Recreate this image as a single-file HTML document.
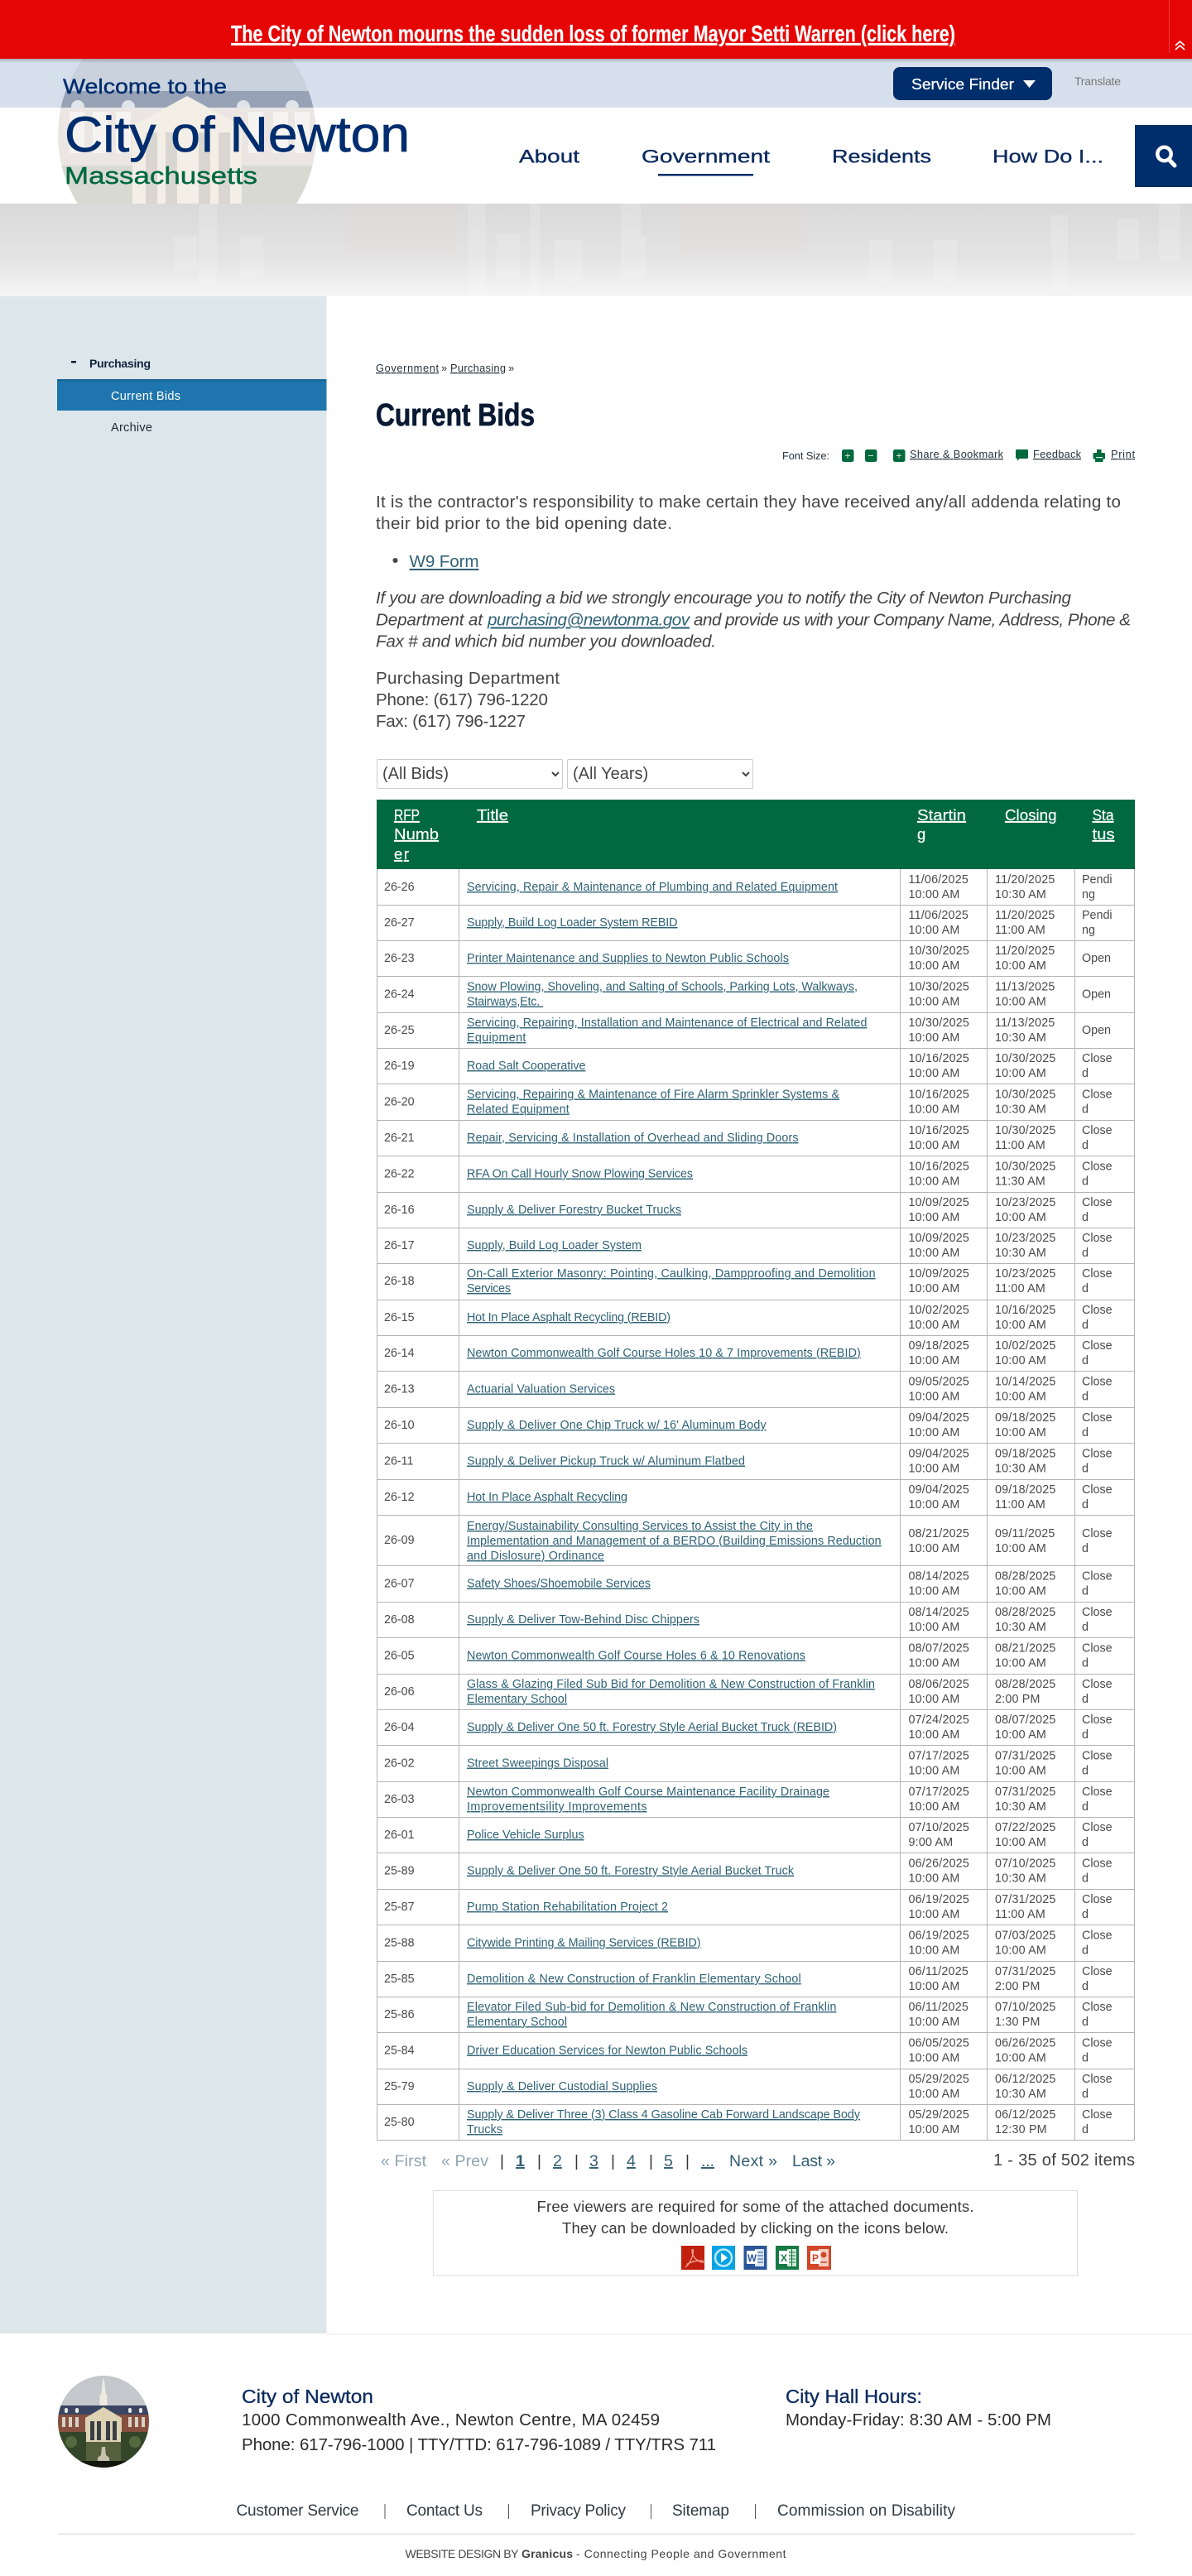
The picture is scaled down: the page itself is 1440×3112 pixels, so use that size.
<!DOCTYPE html>
<html lang="en"><head><meta charset="utf-8"><title>Current Bids | City of Newton</title>
<style>
html,body{margin:0;padding:0;background:#fff}
body{position:relative;width:1440px;height:3112px;overflow:hidden;font-family:"Liberation Sans",sans-serif}
svg{position:absolute;left:0;top:0;display:block}
text{font-family:"Liberation Sans",sans-serif;white-space:pre}
.t text{font-size:14.300px;fill:#4a4a4a}
.t .d{letter-spacing:.2px}
.t .l{fill:#2f6276;text-decoration:underline}
.h text{font-size:18.500px;fill:#fff;text-decoration:underline;stroke:#fff;stroke-width:.2px}
.p{font-size:20.600px;fill:#444}
.nav{font-size:22.500px;fill:#0b2a5e;stroke:#0b2a5e;stroke-width:.35px}
.tb{font-size:12.800px;fill:#26333d}
.pg{font-size:19.500px;fill:#335e72}
.sep{font-size:19px;fill:#333}
.f{font-size:20.500px;fill:#2b2b2b}
.fh{font-size:23px;fill:#0b2a5e;stroke:#0b2a5e;stroke-width:.3px}
.fl{font-size:19px;fill:#2f3a42}
select{position:absolute;top:917px;height:36px;width:225px;font:20px "Liberation Sans",sans-serif;color:#444;background:#fff;border:1px solid #ccc;border-radius:2px;padding:0 2px;box-sizing:border-box}
</style></head><body>
<svg width="1440" height="3112" viewBox="0 0 1440 3112" xmlns="http://www.w3.org/2000/svg">
<defs>
<linearGradient id="hero" x1="0" y1="0" x2="0" y2="1"><stop offset="0" stop-color="#d9d9d9"/><stop offset=".6" stop-color="#e4e4e4"/><stop offset="1" stop-color="#f5f5f5"/></linearGradient>
<linearGradient id="sh" x1="0" y1="0" x2="0" y2="1"><stop offset="0" stop-color="#000" stop-opacity=".22"/><stop offset="1" stop-color="#000" stop-opacity="0"/></linearGradient>
<clipPath id="lc"><path d="M70 71h312v175H70z"/></clipPath>
<clipPath id="lc2"><circle cx="226" cy="163" r="156"/></clipPath>
<clipPath id="fc"><ellipse cx="125" cy="2925.5" rx="55" ry="55.5"/></clipPath>
</defs>

<!-- header bands -->
<rect y="71" width="1440" height="59" fill="#d6e0ec"/>
<rect y="130" width="1440" height="116" fill="#fff"/>
<g clip-path="url(#lc)"><g clip-path="url(#lc2)">
<rect x="70" y="71" width="312" height="39" fill="#c9d2dd"/>
<rect x="70" y="110" width="312" height="20" fill="#97a2b6"/>
<g fill="#dfe4ea"><circle cx="94" cy="129" r="8"/><circle cx="155" cy="129" r="8"/><circle cx="294" cy="129" r="8"/><circle cx="353" cy="129" r="8"/></g>
<rect x="70" y="130" width="312" height="116" fill="#ebe6e3"/>
<g fill="#f6f4f2"><rect x="84" y="135" width="18" height="50"/><rect x="112" y="135" width="18" height="50"/><rect x="140" y="135" width="18" height="50"/><rect x="300" y="135" width="18" height="50"/><rect x="330" y="135" width="18" height="50"/><rect x="356" y="135" width="18" height="50"/></g>
<path d="M226 116l66 36v94H160v-94z" fill="#f3efe6"/>
<g fill="#d9d6d2"><rect x="176" y="160" width="14" height="86"/><rect x="200" y="160" width="14" height="86"/><rect x="240" y="160" width="14" height="86"/><rect x="264" y="160" width="14" height="86"/></g>
<rect x="70" y="200" width="90" height="46" fill="#d8dad2"/><rect x="292" y="200" width="90" height="46" fill="#d8dad2"/>
</g></g>
<rect y="246" width="1440" height="112" fill="url(#hero)"/>
<g fill="#fff" opacity=".17">
<rect x="240" y="246" width="22" height="100"/><rect x="565" y="246" width="22" height="112"/><rect x="640" y="246" width="12" height="112"/>
<rect x="210" y="286" width="28" height="40"/><rect x="290" y="286" width="28" height="50"/><rect x="600" y="282" width="28" height="54"/><rect x="670" y="290" width="34" height="50"/>
<rect x="750" y="246" width="24" height="90"/><rect x="752" y="285" width="28" height="50"/><rect x="1050" y="290" width="28" height="50"/><rect x="1128" y="290" width="28" height="50"/>
<rect x="1270" y="260" width="20" height="90"/><rect x="1350" y="264" width="26" height="50"/><rect x="1400" y="246" width="26" height="70"/>
</g>
<g fill="#e9d8d0" opacity=".14"><rect x="420" y="246" width="130" height="60"/><rect x="820" y="246" width="150" height="60"/></g>

<!-- red alert -->
<rect y="71" width="1440" height="5" fill="url(#sh)"/>
<rect width="1440" height="71" fill="#e60505"/>
<rect x="1412" y="0" width="1" height="64" fill="#f04040"/>
<text x="279" y="50" font-size="28" font-weight="700" fill="#fff" stroke="#fff" stroke-width=".2" textLength="875" lengthAdjust="spacingAndGlyphs" text-decoration="underline">The City of Newton mourns the sudden loss of former Mayor Setti Warren (click here)</text>
<path d="M1420 55l5.500-5 5.500 5M1420 60l5.500-5 5.500 5" fill="none" stroke="#fff" stroke-width="1.700"/>

<!-- logo text -->
<text x="76" y="113" font-size="25" fill="#002d6e" stroke="#002d6e" stroke-width=".4" textLength="198" lengthAdjust="spacingAndGlyphs">Welcome to the</text>
<text x="78" y="183" font-size="60" fill="#002d6e" stroke="#002d6e" stroke-width=".7" textLength="417" lengthAdjust="spacingAndGlyphs">City of Newton</text>
<text x="78" y="222" font-size="29" fill="#00693e" stroke="#00693e" stroke-width=".4" textLength="233" lengthAdjust="spacingAndGlyphs">Massachusetts</text>

<!-- service finder -->
<rect x="1079" y="81" width="192" height="40" rx="8" fill="#002d6b"/>
<text x="1101" y="108" font-size="18" fill="#fff" stroke="#fff" stroke-width=".25" textLength="124" lengthAdjust="spacingAndGlyphs">Service Finder</text>
<path d="M1236 97h15l-7.500 9z" fill="#fff"/>
<text x="1298" y="103" font-size="14" fill="#777" textLength="56">Translate</text>

<!-- nav -->
<text class="nav" x="627" y="196.500" textLength="73" lengthAdjust="spacingAndGlyphs">About</text>
<text class="nav" x="775" y="196.500" textLength="155" lengthAdjust="spacingAndGlyphs">Government</text>
<rect x="795" y="210" width="115" height="2.500" fill="#002d6b"/>
<text class="nav" x="1005" y="196.500" textLength="120" lengthAdjust="spacingAndGlyphs">Residents</text>
<text class="nav" x="1199" y="196.500" textLength="134" lengthAdjust="spacingAndGlyphs">How Do I...</text>
<rect x="1371" y="151" width="69" height="75" fill="#002d6b"/>
<circle cx="1406.500" cy="186" r="8.200" fill="none" stroke="#fff" stroke-width="4.500"/>
<path d="M1412.500 193l6.500 7" stroke="#fff" stroke-width="5" stroke-linecap="round"/>

<!-- sidebar -->
<rect y="358" width="394.500" height="2461" fill="#dce6eb"/>
<rect x="86" y="436" width="6" height="2.500" fill="#0a1f3c"/>
<text x="108" y="444" font-size="14" font-weight="700" fill="#12243c" textLength="74">Purchasing</text>
<rect x="69" y="458" width="325.500" height="38" fill="#1f76ae"/>
<rect x="69" y="458" width="325.500" height="3" fill="#19689b"/>
<text x="134" y="483" font-size="14.500" fill="#fff" textLength="84">Current Bids</text>
<text x="134" y="521" font-size="14.500" fill="#1c2a38" textLength="50">Archive</text>

<!-- content head -->
<text x="454" y="449" font-size="12.800" fill="#26333d" textLength="76" text-decoration="underline">Government</text>
<text x="533" y="449" font-size="12.800" fill="#26333d">»</text>
<text x="544" y="449" font-size="12.800" fill="#26333d" textLength="67" text-decoration="underline">Purchasing</text>
<text x="614" y="449" font-size="12.800" fill="#26333d">»</text>
<text x="454" y="514" font-size="38" font-weight="700" fill="#0a1a33" stroke="#0a1a33" stroke-width=".7" textLength="192" lengthAdjust="spacingAndGlyphs">Current Bids</text>

<!-- toolbar -->
<text class="tb" x="945" y="555" textLength="57">Font Size:</text>
<g fill="#00693e"><rect x="1017" y="543" width="14.500" height="15" rx="2.500"/><rect x="1045" y="543" width="14.500" height="15" rx="2.500"/><rect x="1079" y="543" width="14.500" height="15" rx="2.500"/></g>
<path d="M1021 550.500h6M1024 547.500v6M1049 550.500h6M1083 550.500h6M1086 547.500v6" stroke="#bfe0cf" stroke-width="1"/>
<text class="tb" x="1099" y="553" textLength="113" text-decoration="underline">Share &amp; Bookmark</text>
<path d="M1228.500 543h12a1.500 1.500 0 0 1 1.500 1.500v8a1.500 1.500 0 0 1-1.500 1.500h-9l-2.500 3v-3h-.5a1.500 1.500 0 0 1-1.500-1.500v-8a1.500 1.500 0 0 1 1.500-1.500z" fill="#00693e"/>
<text class="tb" x="1248" y="553" textLength="58" text-decoration="underline">Feedback</text>
<path d="M1325 543h5.500v4h3a1.500 1.500 0 0 1 1.500 1.500v6h-2.500v3.500h-9.500v-3.500h-2.500v-6a1.500 1.500 0 0 1 1.500-1.500h3z" fill="#00693e"/>
<rect x="1324" y="552" width="8" height="1.200" fill="#dff0e6"/>
<text class="tb" x="1342" y="553" textLength="29" text-decoration="underline">Print</text>

<!-- paragraphs -->
<text class="p" x="454" y="613" textLength="900">It is the contractor's responsibility to make certain they have received any/all addenda relating to</text>
<text class="p" x="454" y="639" textLength="358">their bid prior to the bid opening date.</text>
<circle cx="477.500" cy="677" r="3" fill="#444"/>
<text class="p" x="494.500" y="685" textLength="84" style="fill:#2f6276" text-decoration="underline">W9 Form</text>
<g font-style="italic">
<text class="p" x="454" y="729" textLength="840">If you are downloading a bid we strongly encourage you to notify the City of Newton Purchasing</text>
<text class="p" x="454" y="755.500" textLength="129">Department at</text>
<text class="p" x="589" y="755.500" textLength="244" style="fill:#2f6276" text-decoration="underline">purchasing@newtonma.gov</text>
<text class="p" x="838" y="755.500" textLength="528">and provide us with your Company Name, Address, Phone &amp;</text>
<text class="p" x="454" y="781.500" textLength="411">Fax # and which bid number you downloaded.</text>
</g>
<text class="p" x="454" y="826" textLength="222">Purchasing Department</text>
<text class="p" x="454" y="852" textLength="208">Phone: (617) 796-1220</text>
<text class="p" x="454" y="878" textLength="181">Fax: (617) 796-1227</text>

<!-- table header -->
<rect x="455" y="966" width="916" height="84" fill="#006940"/>
<g class="h">
<text x="476" y="991" textLength="31" lengthAdjust="spacingAndGlyphs">RFP</text><text x="476" y="1014" textLength="54" lengthAdjust="spacingAndGlyphs">Numb</text><text x="476" y="1038" textLength="18">er</text>
<text x="576" y="991" textLength="38" lengthAdjust="spacingAndGlyphs">Title</text>
<text x="1108" y="991" textLength="59" lengthAdjust="spacingAndGlyphs">Startin</text><text x="1108" y="1014">g</text>
<text x="1214" y="991" textLength="62.500" lengthAdjust="spacingAndGlyphs">Closing</text>
<text x="1319.500" y="991" textLength="26" lengthAdjust="spacingAndGlyphs">Sta</text><text x="1319.500" y="1014" textLength="27" lengthAdjust="spacingAndGlyphs">tus</text>
</g>

<!-- table grid -->
<path d="M455.500 1050V2585.500M554.500 1050V2585.500M1087.500 1050V2585.500M1192.500 1050V2585.500M1298.500 1050V2585.500M1370.500 1050V2585.500" stroke="#b4b4b4" fill="none"/>
<path d="M455 1093.500H1371M455 1136.500H1371M455 1179.500H1371M455 1223.500H1371M455 1266.500H1371M455 1309.500H1371M455 1353.500H1371M455 1396.500H1371M455 1440.500H1371M455 1483.500H1371M455 1526.500H1371M455 1570.500H1371M455 1613.500H1371M455 1656.500H1371M455 1700.500H1371M455 1743.500H1371M455 1787.500H1371M455 1830.500H1371M455 1891.500H1371M455 1935.500H1371M455 1978.500H1371M455 2022.500H1371M455 2065.500H1371M455 2108.500H1371M455 2152.500H1371M455 2195.500H1371M455 2238.500H1371M455 2282.500H1371M455 2325.500H1371M455 2369.500H1371M455 2412.500H1371M455 2455.500H1371M455 2499.500H1371M455 2542.500H1371M455 2585.500H1371" stroke="#b4b4b4" fill="none"/>

<g class="t">
<g transform="translate(0,1050)"><text x="464" y="26">26-26</text><text class="l" x="564" y="26" textLength="448">Servicing, Repair &amp; Maintenance of Plumbing and Related Equipment</text><text class="d" x="1097.500" y="17">11/06/2025</text><text class="d" x="1097.500" y="35">10:00 AM</text><text class="d" x="1202" y="17">11/20/2025</text><text class="d" x="1202" y="35">10:30 AM</text><text x="1307" y="17">Pendi</text><text x="1307" y="35">ng</text></g>
<g transform="translate(0,1093)"><text x="464" y="26">26-27</text><text class="l" x="564" y="26" textLength="254.500">Supply, Build Log Loader System REBID</text><text class="d" x="1097.500" y="17">11/06/2025</text><text class="d" x="1097.500" y="35">10:00 AM</text><text class="d" x="1202" y="17">11/20/2025</text><text class="d" x="1202" y="35">11:00 AM</text><text x="1307" y="17">Pendi</text><text x="1307" y="35">ng</text></g>
<g transform="translate(0,1136)"><text x="464" y="26">26-23</text><text class="l" x="564" y="26" textLength="389">Printer Maintenance and Supplies to Newton Public Schools</text><text class="d" x="1097.500" y="17">10/30/2025</text><text class="d" x="1097.500" y="35">10:00 AM</text><text class="d" x="1202" y="17">11/20/2025</text><text class="d" x="1202" y="35">10:00 AM</text><text x="1307" y="26">Open</text></g>
<g transform="translate(0,1179.500)"><text x="464" y="26">26-24</text><text class="l" x="564" y="17" textLength="472">Snow Plowing, Shoveling, and Salting of Schools, Parking Lots, Walkways,</text><text class="l" x="564" y="35" textLength="92">Stairways,Etc. </text><text class="d" x="1097.500" y="17">10/30/2025</text><text class="d" x="1097.500" y="35">10:00 AM</text><text class="d" x="1202" y="17">11/13/2025</text><text class="d" x="1202" y="35">10:00 AM</text><text x="1307" y="26">Open</text></g>
<g transform="translate(0,1223)"><text x="464" y="26">26-25</text><text class="l" x="564" y="17" textLength="483.400">Servicing, Repairing, Installation and Maintenance of Electrical and Related</text><text class="l" x="564" y="35" textLength="71.400">Equipment</text><text class="d" x="1097.500" y="17">10/30/2025</text><text class="d" x="1097.500" y="35">10:00 AM</text><text class="d" x="1202" y="17">11/13/2025</text><text class="d" x="1202" y="35">10:30 AM</text><text x="1307" y="26">Open</text></g>
<g transform="translate(0,1266)"><text x="464" y="26">26-19</text><text class="l" x="564" y="26" textLength="143.500">Road Salt Cooperative</text><text class="d" x="1097.500" y="17">10/16/2025</text><text class="d" x="1097.500" y="35">10:00 AM</text><text class="d" x="1202" y="17">10/30/2025</text><text class="d" x="1202" y="35">10:00 AM</text><text x="1307" y="17">Close</text><text x="1307" y="35">d</text></g>
<g transform="translate(0,1309.500)"><text x="464" y="26">26-20</text><text class="l" x="564" y="17" textLength="450">Servicing, Repairing &amp; Maintenance of Fire Alarm Sprinkler Systems &amp;</text><text class="l" x="564" y="35" textLength="123.700">Related Equipment</text><text class="d" x="1097.500" y="17">10/16/2025</text><text class="d" x="1097.500" y="35">10:00 AM</text><text class="d" x="1202" y="17">10/30/2025</text><text class="d" x="1202" y="35">10:30 AM</text><text x="1307" y="17">Close</text><text x="1307" y="35">d</text></g>
<g transform="translate(0,1353)"><text x="464" y="26">26-21</text><text class="l" x="564" y="26" textLength="400.500">Repair, Servicing &amp; Installation of Overhead and Sliding Doors</text><text class="d" x="1097.500" y="17">10/16/2025</text><text class="d" x="1097.500" y="35">10:00 AM</text><text class="d" x="1202" y="17">10/30/2025</text><text class="d" x="1202" y="35">11:00 AM</text><text x="1307" y="17">Close</text><text x="1307" y="35">d</text></g>
<g transform="translate(0,1396.500)"><text x="464" y="26">26-22</text><text class="l" x="564" y="26" textLength="273">RFA On Call Hourly Snow Plowing Services</text><text class="d" x="1097.500" y="17">10/16/2025</text><text class="d" x="1097.500" y="35">10:00 AM</text><text class="d" x="1202" y="17">10/30/2025</text><text class="d" x="1202" y="35">11:30 AM</text><text x="1307" y="17">Close</text><text x="1307" y="35">d</text></g>
<g transform="translate(0,1440)"><text x="464" y="26">26-16</text><text class="l" x="564" y="26" textLength="259">Supply &amp; Deliver Forestry Bucket Trucks</text><text class="d" x="1097.500" y="17">10/09/2025</text><text class="d" x="1097.500" y="35">10:00 AM</text><text class="d" x="1202" y="17">10/23/2025</text><text class="d" x="1202" y="35">10:00 AM</text><text x="1307" y="17">Close</text><text x="1307" y="35">d</text></g>
<g transform="translate(0,1483)"><text x="464" y="26">26-17</text><text class="l" x="564" y="26" textLength="211">Supply, Build Log Loader System</text><text class="d" x="1097.500" y="17">10/09/2025</text><text class="d" x="1097.500" y="35">10:00 AM</text><text class="d" x="1202" y="17">10/23/2025</text><text class="d" x="1202" y="35">10:30 AM</text><text x="1307" y="17">Close</text><text x="1307" y="35">d</text></g>
<g transform="translate(0,1526)"><text x="464" y="26">26-18</text><text class="l" x="564" y="17" textLength="493.600">On-Call Exterior Masonry: Pointing, Caulking, Dampproofing and Demolition</text><text class="l" x="564" y="35" textLength="53">Services</text><text class="d" x="1097.500" y="17">10/09/2025</text><text class="d" x="1097.500" y="35">10:00 AM</text><text class="d" x="1202" y="17">10/23/2025</text><text class="d" x="1202" y="35">11:00 AM</text><text x="1307" y="17">Close</text><text x="1307" y="35">d</text></g>
<g transform="translate(0,1570)"><text x="464" y="26">26-15</text><text class="l" x="564" y="26" textLength="246">Hot In Place Asphalt Recycling (REBID)</text><text class="d" x="1097.500" y="17">10/02/2025</text><text class="d" x="1097.500" y="35">10:00 AM</text><text class="d" x="1202" y="17">10/16/2025</text><text class="d" x="1202" y="35">10:00 AM</text><text x="1307" y="17">Close</text><text x="1307" y="35">d</text></g>
<g transform="translate(0,1613)"><text x="464" y="26">26-14</text><text class="l" x="564" y="26" textLength="475.800">Newton Commonwealth Golf Course Holes 10 &amp; 7 Improvements (REBID)</text><text class="d" x="1097.500" y="17">09/18/2025</text><text class="d" x="1097.500" y="35">10:00 AM</text><text class="d" x="1202" y="17">10/02/2025</text><text class="d" x="1202" y="35">10:00 AM</text><text x="1307" y="17">Close</text><text x="1307" y="35">d</text></g>
<g transform="translate(0,1656.500)"><text x="464" y="26">26-13</text><text class="l" x="564" y="26" textLength="179">Actuarial Valuation Services</text><text class="d" x="1097.500" y="17">09/05/2025</text><text class="d" x="1097.500" y="35">10:00 AM</text><text class="d" x="1202" y="17">10/14/2025</text><text class="d" x="1202" y="35">10:00 AM</text><text x="1307" y="17">Close</text><text x="1307" y="35">d</text></g>
<g transform="translate(0,1700)"><text x="464" y="26">26-10</text><text class="l" x="564" y="26" textLength="361.600">Supply &amp; Deliver One Chip Truck w/ 16' Aluminum Body</text><text class="d" x="1097.500" y="17">09/04/2025</text><text class="d" x="1097.500" y="35">10:00 AM</text><text class="d" x="1202" y="17">09/18/2025</text><text class="d" x="1202" y="35">10:00 AM</text><text x="1307" y="17">Close</text><text x="1307" y="35">d</text></g>
<g transform="translate(0,1743.500)"><text x="464" y="26">26-11</text><text class="l" x="564" y="26" textLength="336">Supply &amp; Deliver Pickup Truck w/ Aluminum Flatbed</text><text class="d" x="1097.500" y="17">09/04/2025</text><text class="d" x="1097.500" y="35">10:00 AM</text><text class="d" x="1202" y="17">09/18/2025</text><text class="d" x="1202" y="35">10:30 AM</text><text x="1307" y="17">Close</text><text x="1307" y="35">d</text></g>
<g transform="translate(0,1787)"><text x="464" y="26">26-12</text><text class="l" x="564" y="26" textLength="194">Hot In Place Asphalt Recycling</text><text class="d" x="1097.500" y="17">09/04/2025</text><text class="d" x="1097.500" y="35">10:00 AM</text><text class="d" x="1202" y="17">09/18/2025</text><text class="d" x="1202" y="35">11:00 AM</text><text x="1307" y="17">Close</text><text x="1307" y="35">d</text></g>
<g transform="translate(0,1830)"><text x="464" y="35">26-09</text><text class="l" x="564" y="18" textLength="418">Energy/Sustainability Consulting Services to Assist the City in the</text><text class="l" x="564" y="36" textLength="500.600">Implementation and Management of a BERDO (Building Emissions Reduction</text><text class="l" x="564" y="54" textLength="166">and Dislosure) Ordinance</text><text class="d" x="1097.500" y="27">08/21/2025</text><text class="d" x="1097.500" y="45">10:00 AM</text><text class="d" x="1202" y="27">09/11/2025</text><text class="d" x="1202" y="45">10:00 AM</text><text x="1307" y="27">Close</text><text x="1307" y="45">d</text></g>
<g transform="translate(0,1891.500)"><text x="464" y="26">26-07</text><text class="l" x="564" y="26" textLength="222">Safety Shoes/Shoemobile Services</text><text class="d" x="1097.500" y="17">08/14/2025</text><text class="d" x="1097.500" y="35">10:00 AM</text><text class="d" x="1202" y="17">08/28/2025</text><text class="d" x="1202" y="35">10:00 AM</text><text x="1307" y="17">Close</text><text x="1307" y="35">d</text></g>
<g transform="translate(0,1935)"><text x="464" y="26">26-08</text><text class="l" x="564" y="26" textLength="281">Supply &amp; Deliver Tow-Behind Disc Chippers</text><text class="d" x="1097.500" y="17">08/14/2025</text><text class="d" x="1097.500" y="35">10:00 AM</text><text class="d" x="1202" y="17">08/28/2025</text><text class="d" x="1202" y="35">10:30 AM</text><text x="1307" y="17">Close</text><text x="1307" y="35">d</text></g>
<g transform="translate(0,1978.500)"><text x="464" y="26">26-05</text><text class="l" x="564" y="26" textLength="409">Newton Commonwealth Golf Course Holes 6 &amp; 10 Renovations</text><text class="d" x="1097.500" y="17">08/07/2025</text><text class="d" x="1097.500" y="35">10:00 AM</text><text class="d" x="1202" y="17">08/21/2025</text><text class="d" x="1202" y="35">10:00 AM</text><text x="1307" y="17">Close</text><text x="1307" y="35">d</text></g>
<g transform="translate(0,2022)"><text x="464" y="26">26-06</text><text class="l" x="564" y="17" textLength="493">Glass &amp; Glazing Filed Sub Bid for Demolition &amp; New Construction of Franklin</text><text class="l" x="564" y="35" textLength="121">Elementary School</text><text class="d" x="1097.500" y="17">08/06/2025</text><text class="d" x="1097.500" y="35">10:00 AM</text><text class="d" x="1202" y="17">08/28/2025</text><text class="d" x="1202" y="35">2:00 PM</text><text x="1307" y="17">Close</text><text x="1307" y="35">d</text></g>
<g transform="translate(0,2065)"><text x="464" y="26">26-04</text><text class="l" x="564" y="26" textLength="447">Supply &amp; Deliver One 50 ft. Forestry Style Aerial Bucket Truck (REBID)</text><text class="d" x="1097.500" y="17">07/24/2025</text><text class="d" x="1097.500" y="35">10:00 AM</text><text class="d" x="1202" y="17">08/07/2025</text><text class="d" x="1202" y="35">10:00 AM</text><text x="1307" y="17">Close</text><text x="1307" y="35">d</text></g>
<g transform="translate(0,2108.500)"><text x="464" y="26">26-02</text><text class="l" x="564" y="26" textLength="171">Street Sweepings Disposal</text><text class="d" x="1097.500" y="17">07/17/2025</text><text class="d" x="1097.500" y="35">10:00 AM</text><text class="d" x="1202" y="17">07/31/2025</text><text class="d" x="1202" y="35">10:00 AM</text><text x="1307" y="17">Close</text><text x="1307" y="35">d</text></g>
<g transform="translate(0,2152)"><text x="464" y="26">26-03</text><text class="l" x="564" y="17" textLength="438">Newton Commonwealth Golf Course Maintenance Facility Drainage</text><text class="l" x="564" y="35" textLength="217.500">Improvementsility Improvements</text><text class="d" x="1097.500" y="17">07/17/2025</text><text class="d" x="1097.500" y="35">10:00 AM</text><text class="d" x="1202" y="17">07/31/2025</text><text class="d" x="1202" y="35">10:30 AM</text><text x="1307" y="17">Close</text><text x="1307" y="35">d</text></g>
<g transform="translate(0,2195)"><text x="464" y="26">26-01</text><text class="l" x="564" y="26" textLength="141.600">Police Vehicle Surplus</text><text class="d" x="1097.500" y="17">07/10/2025</text><text class="d" x="1097.500" y="35">9:00 AM</text><text class="d" x="1202" y="17">07/22/2025</text><text class="d" x="1202" y="35">10:00 AM</text><text x="1307" y="17">Close</text><text x="1307" y="35">d</text></g>
<g transform="translate(0,2238.500)"><text x="464" y="26">25-89</text><text class="l" x="564" y="26" textLength="395">Supply &amp; Deliver One 50 ft. Forestry Style Aerial Bucket Truck</text><text class="d" x="1097.500" y="17">06/26/2025</text><text class="d" x="1097.500" y="35">10:00 AM</text><text class="d" x="1202" y="17">07/10/2025</text><text class="d" x="1202" y="35">10:30 AM</text><text x="1307" y="17">Close</text><text x="1307" y="35">d</text></g>
<g transform="translate(0,2282)"><text x="464" y="26">25-87</text><text class="l" x="564" y="26" textLength="243">Pump Station Rehabilitation Project 2</text><text class="d" x="1097.500" y="17">06/19/2025</text><text class="d" x="1097.500" y="35">10:00 AM</text><text class="d" x="1202" y="17">07/31/2025</text><text class="d" x="1202" y="35">11:00 AM</text><text x="1307" y="17">Close</text><text x="1307" y="35">d</text></g>
<g transform="translate(0,2325.500)"><text x="464" y="26">25-88</text><text class="l" x="564" y="26" textLength="282.500">Citywide Printing &amp; Mailing Services (REBID)</text><text class="d" x="1097.500" y="17">06/19/2025</text><text class="d" x="1097.500" y="35">10:00 AM</text><text class="d" x="1202" y="17">07/03/2025</text><text class="d" x="1202" y="35">10:00 AM</text><text x="1307" y="17">Close</text><text x="1307" y="35">d</text></g>
<g transform="translate(0,2369)"><text x="464" y="26">25-85</text><text class="l" x="564" y="26" textLength="403.700">Demolition &amp; New Construction of Franklin Elementary School</text><text class="d" x="1097.500" y="17">06/11/2025</text><text class="d" x="1097.500" y="35">10:00 AM</text><text class="d" x="1202" y="17">07/31/2025</text><text class="d" x="1202" y="35">2:00 PM</text><text x="1307" y="17">Close</text><text x="1307" y="35">d</text></g>
<g transform="translate(0,2412)"><text x="464" y="26">25-86</text><text class="l" x="564" y="17" textLength="446.400">Elevator Filed Sub-bid for Demolition &amp; New Construction of Franklin</text><text class="l" x="564" y="35" textLength="121">Elementary School</text><text class="d" x="1097.500" y="17">06/11/2025</text><text class="d" x="1097.500" y="35">10:00 AM</text><text class="d" x="1202" y="17">07/10/2025</text><text class="d" x="1202" y="35">1:30 PM</text><text x="1307" y="17">Close</text><text x="1307" y="35">d</text></g>
<g transform="translate(0,2455.500)"><text x="464" y="26">25-84</text><text class="l" x="564" y="26" textLength="339">Driver Education Services for Newton Public Schools</text><text class="d" x="1097.500" y="17">06/05/2025</text><text class="d" x="1097.500" y="35">10:00 AM</text><text class="d" x="1202" y="17">06/26/2025</text><text class="d" x="1202" y="35">10:00 AM</text><text x="1307" y="17">Close</text><text x="1307" y="35">d</text></g>
<g transform="translate(0,2499)"><text x="464" y="26">25-79</text><text class="l" x="564" y="26" textLength="230">Supply &amp; Deliver Custodial Supplies</text><text class="d" x="1097.500" y="17">05/29/2025</text><text class="d" x="1097.500" y="35">10:00 AM</text><text class="d" x="1202" y="17">06/12/2025</text><text class="d" x="1202" y="35">10:30 AM</text><text x="1307" y="17">Close</text><text x="1307" y="35">d</text></g>
<g transform="translate(0,2542)"><text x="464" y="26">25-80</text><text class="l" x="564" y="17" textLength="475">Supply &amp; Deliver Three (3) Class 4 Gasoline Cab Forward Landscape Body</text><text class="l" x="564" y="35" textLength="43">Trucks</text><text class="d" x="1097.500" y="17">05/29/2025</text><text class="d" x="1097.500" y="35">10:00 AM</text><text class="d" x="1202" y="17">06/12/2025</text><text class="d" x="1202" y="35">12:30 PM</text><text x="1307" y="17">Close</text><text x="1307" y="35">d</text></g>
</g>

<!-- pagination -->
<text class="pg" x="460" y="2617" textLength="55" style="fill:#8fa5b0">« First</text>
<text class="pg" x="533" y="2617" textLength="57" style="fill:#8fa5b0">« Prev</text>
<text class="sep" x="604" y="2617">|</text>
<text class="pg" x="623" y="2617" font-weight="700" text-decoration="underline">1</text>
<text class="sep" x="649" y="2617">|</text>
<text class="pg" x="668" y="2617" text-decoration="underline">2</text>
<text class="sep" x="694" y="2617">|</text>
<text class="pg" x="712" y="2617" text-decoration="underline">3</text>
<text class="sep" x="738" y="2617">|</text>
<text class="pg" x="757" y="2617" text-decoration="underline">4</text>
<text class="sep" x="784" y="2617">|</text>
<text class="pg" x="802" y="2617" text-decoration="underline">5</text>
<text class="sep" x="828" y="2617">|</text>
<text class="pg" x="847" y="2617" textLength="16" text-decoration="underline">...</text>
<text class="pg" x="881" y="2617" textLength="58">Next »</text>
<text class="pg" x="957" y="2617" textLength="52">Last »</text>
<text x="1200" y="2616" font-size="20" fill="#444" textLength="171">1 - 35 of 502 items</text>

<!-- viewers -->
<rect x="523.500" y="2646.500" width="778" height="102.500" fill="#fff" stroke="#ddd"/>
<text x="648.500" y="2672" font-size="18.500" fill="#3a3a3a" textLength="528">Free viewers are required for some of the attached documents.</text>
<text x="679" y="2698" font-size="18.500" fill="#3a3a3a" textLength="467">They can be downloaded by clicking on the icons below.</text>
<rect x="823" y="2713" width="28" height="29" fill="#c2200f"/>
<path d="M828 2739c5-4 9-12 9.500-19 .2-3-1.500-3.500-1.500-.5 0 6 6 13 13 13.500 1.500 0 1-1.500-.5-1.700-6-.8-13 1-19 4.200" fill="none" stroke="#f3a090" stroke-width="1.300"/>
<rect x="860" y="2713" width="28" height="29" fill="#05a2e4"/>
<circle cx="874" cy="2727.500" r="10" fill="none" stroke="#bde9fb" stroke-width="2.500"/>
<path d="M871 2721.500l8 6-8 6z" fill="#fff"/>
<rect x="898.500" y="2713" width="28" height="29" fill="#2a5699"/>
<rect x="912" y="2717" width="11" height="21" fill="#d9e3f2"/>
<path d="M913 2721h9M913 2725h9M913 2729h9M913 2733h9" stroke="#2a5699" stroke-width="1"/>
<rect x="902" y="2719" width="13" height="16" fill="#fff"/>
<text x="903" y="2732" font-size="12" font-weight="700" fill="#2a5699" textLength="11" lengthAdjust="spacingAndGlyphs">W</text>
<rect x="937" y="2713" width="28" height="29" fill="#157a43"/>
<rect x="951" y="2717" width="11" height="21" fill="#cfe8d9"/>
<path d="M952 2721h9M952 2725h9M952 2729h9M952 2733h9M956.500 2717v21" stroke="#157a43" stroke-width="1"/>
<rect x="941" y="2719" width="12" height="16" fill="#fff"/>
<text x="943" y="2732" font-size="12" font-weight="700" fill="#157a43">X</text>
<rect x="975" y="2713" width="29" height="29" fill="#d2472a"/>
<rect x="989" y="2717" width="12" height="21" fill="#f6cdbf"/>
<path d="M991 2733h8" stroke="#d2472a" stroke-width="1.500"/><circle cx="995" cy="2724" r="3.500" fill="#d2472a"/>
<rect x="979" y="2719" width="12" height="16" fill="#fff"/>
<text x="981" y="2732" font-size="12" font-weight="700" fill="#d2472a">P</text>

<!-- footer -->
<rect x="395" y="2819" width="1045" height="2" fill="#f3f3f3"/>
<g clip-path="url(#fc)">
<rect x="70" y="2870" width="110" height="112" fill="#c4c8cd"/>
<path d="M123.500 2879l1.500-7 1.500 7 1 12 2 3v14h-9v-14l2-3z" fill="#eeeae0"/>
<rect x="70" y="2906" width="110" height="11" fill="#3a4661"/>
<g fill="#e8e8e8"><rect x="78" y="2909" width="4" height="6" rx="2"/><rect x="91" y="2909" width="4" height="6" rx="2"/><rect x="155" y="2909" width="4" height="6" rx="2"/><rect x="168" y="2909" width="4" height="6" rx="2"/></g>
<rect x="70" y="2917" width="110" height="24" fill="#87503f"/>
<g fill="#d8d2c6"><rect x="75" y="2920" width="4" height="12"/><rect x="83" y="2920" width="4" height="12"/><rect x="91" y="2920" width="4" height="12"/><rect x="155" y="2920" width="4" height="12"/><rect x="163" y="2920" width="4" height="12"/><rect x="171" y="2920" width="4" height="12"/></g>
<path d="M125 2908l22 13v30h-44v-30z" fill="#ddd2b4"/>
<g fill="#3a3f44"><rect x="109" y="2925" width="5" height="23"/><rect x="117" y="2925" width="5" height="23"/><rect x="128" y="2925" width="5" height="23"/><rect x="136" y="2925" width="5" height="23"/></g>
<rect x="70" y="2938" width="34" height="44" fill="#33462a"/><rect x="146" y="2938" width="34" height="44" fill="#33462a"/>
<g fill="#55693f"><circle cx="86" cy="2950" r="7"/><circle cx="163" cy="2950" r="7"/></g>
<rect x="104" y="2950" width="42" height="32" fill="#55603f"/>
<path d="M123 2956h4l1 10 4 3v4h-14v-4l4-3z" fill="#c7c0ae"/>
<rect x="96" y="2973" width="58" height="9" fill="#12170c"/>
</g>
<text class="fh" x="292" y="2903" textLength="159" lengthAdjust="spacingAndGlyphs">City of Newton</text>
<text class="f" x="292" y="2930" textLength="505">1000 Commonwealth Ave., Newton Centre, MA 02459</text>
<text class="f" x="292" y="2960" textLength="573">Phone: 617-796-1000 | TTY/TTD: 617-796-1089 / TTY/TRS 711</text>
<text class="fh" x="949" y="2903" textLength="165" lengthAdjust="spacingAndGlyphs">City Hall Hours:</text>
<text class="f" x="949" y="2930" textLength="321">Monday-Friday: 8:30 AM - 5:00 PM</text>
<text class="fl" x="285.500" y="3039" textLength="148">Customer Service</text>
<rect x="464.500" y="3025" width="1" height="18" fill="#555"/>
<text class="fl" x="491" y="3039" textLength="92">Contact Us</text>
<rect x="614" y="3025" width="1" height="18" fill="#555"/>
<text class="fl" x="641" y="3039" textLength="115">Privacy Policy</text>
<rect x="786" y="3025" width="1" height="18" fill="#555"/>
<text class="fl" x="812" y="3039" textLength="69">Sitemap</text>
<rect x="912" y="3025" width="1" height="18" fill="#555"/>
<text class="fl" x="939" y="3039" textLength="215">Commission on Disability</text>
<rect x="70" y="3060.500" width="1301" height="1.500" fill="#e4e4e4"/>
<text x="489.500" y="3090" font-size="14" fill="#444" textLength="137">WEBSITE DESIGN BY</text>
<text x="630" y="3090" font-size="14" font-weight="700" fill="#444" textLength="62">Granicus</text>
<text x="696" y="3090" font-size="14" fill="#444" textLength="253.500">- Connecting People and Government</text>
</svg>
<select style="left:455px"><option>(All Bids)</option></select>
<select style="left:685px"><option>(All Years)</option></select>
</body></html>
